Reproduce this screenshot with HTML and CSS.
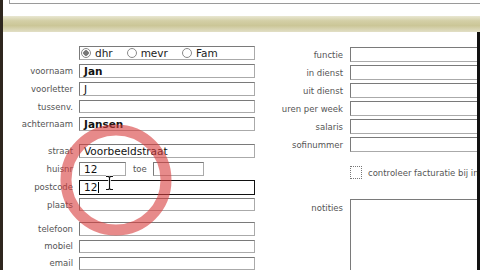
FILE: index.html
```html
<!DOCTYPE html>
<html lang="nl">
<head>
    <meta charset="UTF-8">
    <title>Medewerker</title>
    <link rel="stylesheet" href="styles.css">
</head>
<body>
    <div class="page">
        <div class="top-field"></div>
        <div class="band"></div>

        <div class="form">
            <div class="col-left">
                <div class="row">
                    <span class="label"></span>
                    <div class="field radios">
                        <span class="radio checked"></span><span class="radio-text">dhr</span>
                        <span class="radio"></span><span class="radio-text">mevr</span>
                        <span class="radio"></span><span class="radio-text">Fam</span>
                    </div>
                </div>
                <div class="row"><span class="label">voornaam</span><div class="field bold">Jan</div></div>
                <div class="row"><span class="label">voorletter</span><div class="field">J</div></div>
                <div class="row"><span class="label">tussenv.</span><div class="field"></div></div>
                <div class="row"><span class="label">achternaam</span><div class="field bold">Jansen</div></div>

                <div class="row group"><span class="label">straat</span><div class="field">Voorbeeldstraat</div></div>
                <div class="row">
                    <span class="label">huisnr</span>
                    <div class="field small">12</div>
                    <span class="label-inline">toe</span>
                    <div class="field toe"></div>
                </div>
                <div class="row"><span class="label">postcode</span><div class="field focus">12<span class="caret"></span></div></div>
                <div class="row"><span class="label">plaats</span><div class="field"></div></div>

                <div class="row group2"><span class="label">telefoon</span><div class="field"></div></div>
                <div class="row"><span class="label">mobiel</span><div class="field"></div></div>
                <div class="row"><span class="label">email</span><div class="field"></div></div>
            </div>

            <div class="col-right">
                <div class="row"><span class="label">functie</span><div class="field"></div></div>
                <div class="row"><span class="label">in dienst</span><div class="field"></div></div>
                <div class="row"><span class="label">uit dienst</span><div class="field"></div></div>
                <div class="row"><span class="label">uren per week</span><div class="field"></div></div>
                <div class="row"><span class="label">salaris</span><div class="field"></div></div>
                <div class="row"><span class="label">sofinummer</span><div class="field"></div></div>

                <div class="row check-row">
                    <span class="label"></span>
                    <span class="checkbox"></span>
                    <span class="check-text">controleer facturatie bij inkoop</span>
                </div>

                <div class="row notes-row">
                    <span class="label">notities</span>
                    <div class="field notes"></div>
                </div>
            </div>
        </div>

        <!-- highlight from the screencast -->
        <svg class="ring" width="112" height="112" viewBox="0 0 112 112">
            <circle cx="56" cy="56" r="50" fill="none" stroke="rgba(215,60,60,0.6)" stroke-width="11"/>
        </svg>
        <svg class="ibeam" width="9" height="16" viewBox="0 0 9 16">
            <path d="M1 1.5h2.5l1 1 1-1H8M4.5 2.5v11M1 14.5h2.5l1-1 1 1H8" fill="none" stroke="#fff" stroke-width="2.6"/>
            <path d="M1 1.5h2.5l1 1 1-1H8M4.5 2.5v11M1 14.5h2.5l1-1 1 1H8" fill="none" stroke="#111" stroke-width="1.1"/>
        </svg>
    </div>
</body>
</html>
```

FILE: styles.css
```css
body { margin: 0; background: #fff; font-family: "DejaVu Sans", Verdana, sans-serif; }

.page {
    position: relative;
    width: 480px;
    height: 270px;
    overflow: hidden;
    box-sizing: border-box;
    border-left: 3px solid #2e261e;
}

.top-field {
    height: 3px;
    margin-left: 6px;
    border-left: 1px solid #9a9a9a;
    border-bottom: 1px solid #9a9a9a;
}

.band {
    margin-top: 12px;
    height: 16px;
    background: linear-gradient(#e9e7d2 0%, #d3cfa6 30%, #cbc697 60%, #e2dfc6 100%);
}

.form {
    display: flex;
    height: 238px;
    border-right: 3px solid #111;
    overflow: hidden;
    white-space: nowrap;
}

.col-left {
    width: 252px;
    flex-shrink: 0;
    padding-top: 14px;
    display: flex;
    flex-direction: column;
    gap: 4px;
}

.col-right {
    flex: 1;
    padding-top: 15px;
    display: flex;
    flex-direction: column;
    gap: 3px;
}

.row {
    display: flex;
    align-items: center;
    height: 14px;
}

.col-right .row { height: 15px; }

.group { margin-top: 9px; }
.group2 { margin-top: 7px; }

.label {
    flex-shrink: 0;
    width: 70px;
    margin-right: 6px;
    text-align: right;
    font-size: 8.5px;
    color: #555;
}

.col-right .label {
    width: 88px;
    margin-right: 7px;
}

.field {
    flex-shrink: 0;
    width: 176px;
    height: 100%;
    box-sizing: border-box;
    border: 1px solid #aaa;
    border-top-color: #7a7a7a;
    border-left-color: #7a7a7a;
    padding-left: 4px;
    font-size: 10.5px;
    line-height: 12px;
    color: #111;
}

.col-right .field { width: 140px; }

.bold { font-weight: bold; }

.field.small { width: 47px; }
.field.toe { width: 51px; }

.label-inline {
    margin: 0 6px 0 7px;
    font-size: 8.5px;
    color: #555;
}

.field.focus {
    border-color: #111;
    height: 15px;
}

.caret {
    display: inline-block;
    width: 1px;
    height: 11px;
    margin-left: 1px;
    background: #000;
    vertical-align: -2px;
}

.radios {
    display: flex;
    align-items: center;
    padding-left: 1px;
    color: #222;
}

.radio {
    width: 10px;
    height: 10px;
    box-sizing: border-box;
    border: 1px solid #8a8a8a;
    border-radius: 50%;
    background: #fff;
}

.radio.checked {
    background: radial-gradient(circle, #777 0 2.5px, #fff 3px);
}

.radio-text {
    margin: 0 14px 0 4px;
}

.check-row {
    margin-top: 10px;
    height: 14px;
}

.checkbox {
    width: 12px;
    height: 13px;
    box-sizing: border-box;
    border: 1px dotted #777;
}

.check-text {
    margin-left: 6px;
    font-size: 8.5px;
    color: #555;
}

.notes-row {
    margin-top: 16px;
    align-items: flex-start;
}

.notes-row .label { padding-top: 4px; }

.field.notes {
    height: 90px;
    border-right: none;
    border-bottom: none;
}

.ring {
    position: absolute;
    left: 57px;
    top: 124px;
}

.ibeam {
    position: absolute;
    left: 102px;
    top: 175px;
}
```
